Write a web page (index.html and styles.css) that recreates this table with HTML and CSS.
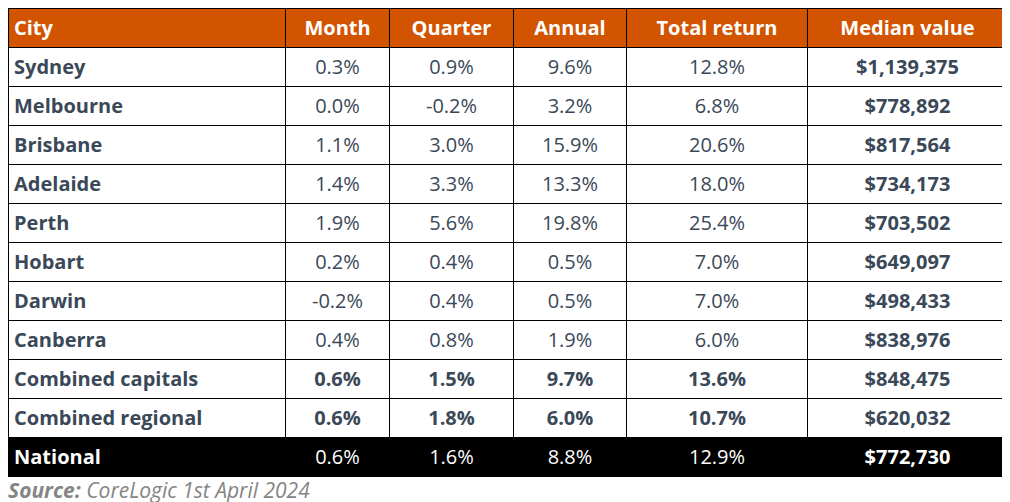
FILE: index.html
```html
<!DOCTYPE html>
<html>
<head>
<meta charset="utf-8">
<link rel="stylesheet" href="styles.css">
</head>
<body>
<table class="data">
  <colgroup>
    <col class="c-city"><col class="c-month"><col class="c-quarter"><col class="c-annual"><col class="c-total"><col class="c-median">
  </colgroup>
  <thead>
    <tr><th class="city">City</th><th>Month</th><th>Quarter</th><th>Annual</th><th>Total return</th><th>Median value</th></tr>
  </thead>
  <tbody>
    <tr><td class="city">Sydney</td><td>0.3%</td><td>0.9%</td><td>9.6%</td><td>12.8%</td><td class="med">$1,139,375</td></tr>
    <tr><td class="city">Melbourne</td><td>0.0%</td><td>-0.2%</td><td>3.2%</td><td>6.8%</td><td class="med">$778,892</td></tr>
    <tr><td class="city">Brisbane</td><td>1.1%</td><td>3.0%</td><td>15.9%</td><td>20.6%</td><td class="med">$817,564</td></tr>
    <tr><td class="city">Adelaide</td><td>1.4%</td><td>3.3%</td><td>13.3%</td><td>18.0%</td><td class="med">$734,173</td></tr>
    <tr><td class="city">Perth</td><td>1.9%</td><td>5.6%</td><td>19.8%</td><td>25.4%</td><td class="med">$703,502</td></tr>
    <tr><td class="city">Hobart</td><td>0.2%</td><td>0.4%</td><td>0.5%</td><td>7.0%</td><td class="med">$649,097</td></tr>
    <tr><td class="city">Darwin</td><td>-0.2%</td><td>0.4%</td><td>0.5%</td><td>7.0%</td><td class="med">$498,433</td></tr>
    <tr><td class="city">Canberra</td><td>0.4%</td><td>0.8%</td><td>1.9%</td><td>6.0%</td><td class="med">$838,976</td></tr>
    <tr class="combined"><td class="city">Combined capitals</td><td>0.6%</td><td>1.5%</td><td>9.7%</td><td>13.6%</td><td class="med">$848,475</td></tr>
    <tr class="combined"><td class="city">Combined regional</td><td>0.6%</td><td>1.8%</td><td>6.0%</td><td>10.7%</td><td class="med">$620,032</td></tr>
    <tr class="national"><td class="city">National</td><td>0.6%</td><td>1.6%</td><td>8.8%</td><td>12.9%</td><td class="med">$772,730</td></tr>
  </tbody>
</table>
<p class="source"><b>Source:</b> CoreLogic 1st April 2024</p>
</body>
</html>
```
FILE: styles.css
```css
body {
  margin: 8px;
  font-family: "Open Sans", "Liberation Sans", sans-serif;
  background: #ffffff;
}
.data {
  border-collapse: collapse;
  width: 999px;
  min-width: 999px;
  table-layout: fixed;
  font-size: 20px;
  color: #3a4858;
}
.c-city { width: 277px; }
.c-month { width: 104px; }
.c-quarter { width: 124px; }
.c-annual { width: 113px; }
.c-total { width: 181px; }
.c-median { width: 200px; }
.data th,
.data td {
  border: 1px solid #000;
  padding: 8px 5px;
  line-height: 22px;
  text-align: center;
  white-space: nowrap;
}
.data th {
  background: #d35400;
  color: #ffffff;
  font-weight: 700;
}
.data .city {
  text-align: left;
  font-weight: 700;
}
.data .med {
  font-weight: 700;
}
.combined td {
  font-weight: 700;
}
.national td {
  background: #000;
  color: #ffffff;
}
.source {
  margin: 0;
  font-style: italic;
  font-size: 21px;
  line-height: 26px;
  color: #858585;
}
.source b {
  font-weight: 700;
}
```
